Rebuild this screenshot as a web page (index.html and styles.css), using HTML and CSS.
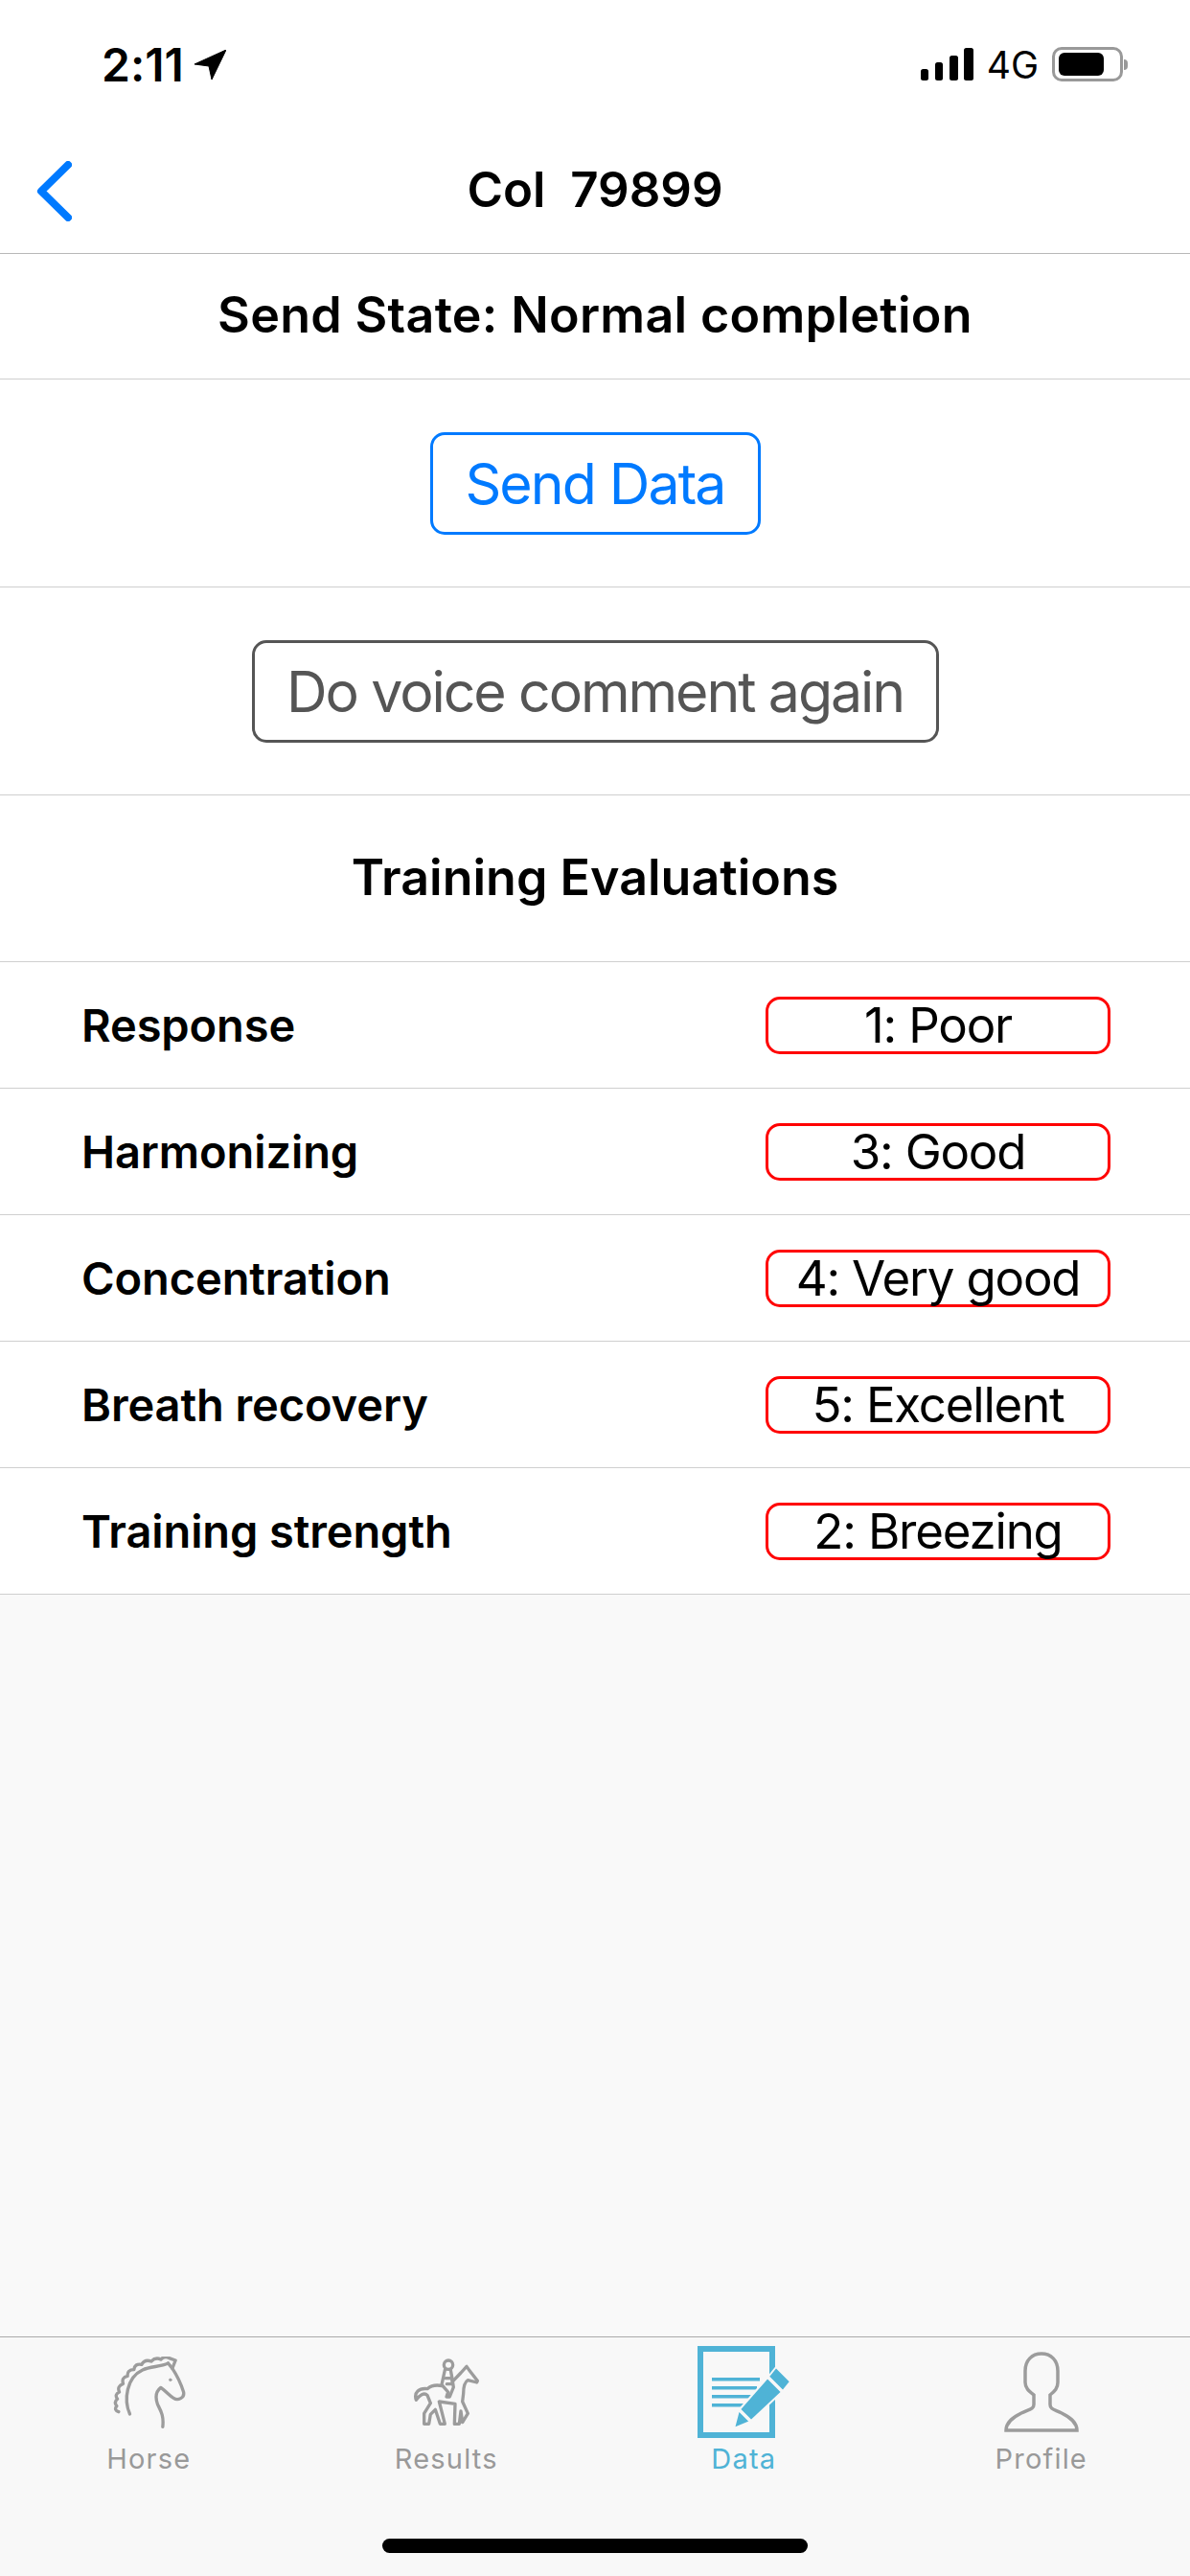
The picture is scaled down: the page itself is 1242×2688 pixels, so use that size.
FILE: index.html
```html
<!DOCTYPE html>
<html lang="en">
<head>
    <meta charset="UTF-8">
    <meta name="viewport" content="width=device-width, initial-scale=1.0">
    <title>Col 79899</title>
    <link rel="stylesheet" href="styles.css">
</head>
<body>
    <div class="page">
        <!-- Status bar -->
        <div class="status-bar">
            <div class="status-left">
                <span class="time">2:11</span>
                <svg class="location" viewBox="0 0 33 31"><path d="M33 0 L0 15 L15 17 L18 31 Z" fill="#000" stroke="#000" stroke-width="1" stroke-linejoin="round"/></svg>
            </div>
            <div class="status-right">
                <svg class="signal" viewBox="0 0 55 34">
                    <rect x="0" y="22" width="8" height="12" rx="2.500"/>
                    <rect x="15" y="15" width="8" height="19" rx="2.500"/>
                    <rect x="30" y="8" width="9" height="26" rx="2.500"/>
                    <rect x="45" y="0" width="10" height="34" rx="2.500"/>
                </svg>
                <span class="network">4G</span>
                <div class="battery"><div class="battery-level"></div></div>
                <div class="battery-nub"></div>
            </div>
        </div>

        <!-- Nav bar -->
        <div class="nav-bar">
            <svg class="back" viewBox="0 0 37 63"><path d="M33 4 L5 31.500 L33 59" fill="none" stroke="#007aff" stroke-width="8" stroke-linecap="round" stroke-linejoin="round"/></svg>
            <div class="nav-title">Col  79899</div>
        </div>

        <div class="section state-row">Send State: Normal completion</div>
        <div class="section button-row"><button class="btn btn-send">Send Data</button></div>
        <div class="section button-row"><button class="btn btn-voice">Do voice comment again</button></div>
        <div class="section eval-title">Training Evaluations</div>

        <div class="section eval-row"><span class="eval-label">Response</span><span class="eval-value">1: Poor</span></div>
        <div class="section eval-row"><span class="eval-label">Harmonizing</span><span class="eval-value">3: Good</span></div>
        <div class="section eval-row"><span class="eval-label">Concentration</span><span class="eval-value">4: Very good</span></div>
        <div class="section eval-row"><span class="eval-label">Breath recovery</span><span class="eval-value">5: Excellent</span></div>
        <div class="section eval-row"><span class="eval-label">Training strength</span><span class="eval-value">2: Breezing</span></div>

        <div class="spacer"></div>

        <!-- Tab bar -->
        <div class="tab-bar">
            <div class="tabs">
                <div class="tab">
                    <div class="tab-icon">
                        <svg class="icon-horse" viewBox="170 85 230 225" fill="none" stroke="#9c9c9c" stroke-width="10" stroke-linecap="round" stroke-linejoin="round">
                            <path d="M225 265 C205 220 215 150 265 127 C290 115 320 118 345 106"/>
                            <path d="M190 258 Q174 252 184 240 Q174 228 186 218 Q176 204 192 196 Q184 178 204 170 Q198 150 218 146 Q216 126 238 126 Q240 106 262 110 Q272 92 292 100 Q306 86 322 94 Q334 82 348 90 L368 97 L358 122"/>
                            <path d="M345 106 L358 122 C370 140 385 170 393 195 C398 215 375 224 362 215 C350 208 340 195 322 182 C305 195 305 215 312 235 C322 255 332 270 328 305"/>
                            <circle cx="352" cy="158" r="4" fill="#9c9c9c" stroke-width="2"/>
                        </svg>
                    </div>
                    <div class="tab-label">Horse</div>
                </div>
                <div class="tab">
                    <div class="tab-icon">
                        <svg class="icon-rider" viewBox="90 90 210 210" fill="none" stroke="#9c9c9c" stroke-width="10" stroke-linecap="round" stroke-linejoin="round">
                            <circle cx="201" cy="110" r="14"/>
                            <path d="M190 126 L180 172 L200 195 L195 210 L205 210 L217 180 L212 148 L208 126"/>
                            <path d="M192 152 L212 152 L214 170 L196 170"/>
                            <path d="M182 176 C165 172 150 172 135 185 C110 182 92 195 100 220 C110 205 125 195 135 205 L145 230 L125 262 L125 295 L140 295 L145 265 L160 250 L175 295 L190 295 L172 225 L222 232 L220 295 L235 295 L240 255 L245 290 L262 262 L245 225 L248 200 C248 180 250 165 262 158 L290 165 L292 160 L265 125 L258 115 L240 135 L216 160"/>
                        </svg>
                    </div>
                    <div class="tab-label">Results</div>
                </div>
                <div class="tab tab-active">
                    <div class="tab-icon">
                        <svg class="icon-data" viewBox="0 0 96 96">
                            <rect x="3" y="3" width="75" height="90" fill="none" stroke="#4fb3d6" stroke-width="6"/>
                            <rect x="15" y="33" width="50" height="3.500" fill="#4fb3d6"/>
                            <rect x="15" y="42" width="47" height="3.500" fill="#4fb3d6"/>
                            <rect x="15" y="51" width="42" height="3.500" fill="#4fb3d6"/>
                            <rect x="15" y="60" width="37" height="3.500" fill="#4fb3d6"/>
                            <g fill="#4fb3d6" stroke="#f8f8f8" stroke-width="2" stroke-linejoin="round">
                                <polygon points="82,22 97,37 89,47 74,32"/>
                                <polygon points="73,33 88,48 56,78 44,66"/>
                                <polygon points="43,67 55,79 38,86"/>
                            </g>
                        </svg>
                    </div>
                    <div class="tab-label">Data</div>
                </div>
                <div class="tab">
                    <div class="tab-icon">
                        <svg class="icon-profile" viewBox="0 0 78 84">
                            <path d="M39 2 C29 2 22 9 22 20 L22 32 C22 38 26 41 31 45 L31 55 C31 60 26 60 18 64 C8 69 2 74 2 82 L76 82 C76 74 70 69 60 64 C52 60 48 60 48 55 L48 45 C53 41 56 38 56 32 L56 20 C56 9 49 2 39 2 Z" fill="none" stroke="#9c9c9c" stroke-width="3.500"/>
                        </svg>
                    </div>
                    <div class="tab-label">Profile</div>
                </div>
            </div>
            <div class="home-indicator"></div>
        </div>
    </div>
</body>
</html>
```
FILE: styles.css
```css
body {
    margin: 0;
    font-family: Inter, "Liberation Sans", sans-serif;
    font-variant-ligatures: no-contextual;
    background-color: #f9f9f9;
    color: #000;
}
.page {
    display: flex;
    flex-direction: column;
    height: 2688px;
    overflow: hidden;
}

/* Status bar */
.status-bar {
    display: flex;
    justify-content: space-between;
    align-items: center;
    height: 134px;
    padding: 0 65px 0 106px;
    background-color: #fff;
    box-sizing: border-box;
}
.status-left, .status-right {
    display: flex;
    align-items: center;
}
.time {
    font-size: 48px;
    font-weight: 600;
}
.location {
    width: 33px;
    height: 31px;
    margin-left: 11px;
}
.signal {
    width: 55px;
    height: 34px;
}
.network {
    font-size: 39px;
    margin-left: 14px;
}
.battery {
    width: 74px;
    height: 36px;
    margin-left: 14px;
    padding: 3px 4px;
    border: 3px solid #999;
    border-radius: 10px;
    box-sizing: border-box;
}
.battery-level {
    width: 47px;
    height: 24px;
    background-color: #000;
    border-radius: 6px;
}
.battery-nub {
    width: 4px;
    height: 11px;
    margin-left: 1px;
    background-color: #999;
    border-radius: 0 4px 4px 0;
}

/* Nav bar */
.nav-bar {
    display: grid;
    grid-template-columns: 1fr auto 1fr;
    align-items: center;
    height: 130px;
    padding-left: 38px;
    padding-right: 38px;
    background-color: #fff;
    border-bottom: 1px solid #b8b8b8;
}
.back {
    width: 37px;
    height: 63px;
}
.nav-title {
    font-size: 51px;
    font-weight: 600;
    line-height: 60px;
    padding-bottom: 3px;
    white-space: pre;
}

/* Rows */
.section {
    background-color: #fff;
    border-bottom: 1px solid #cfcfcf;
}
.state-row {
    height: 130px;
    line-height: 128px;
    text-align: center;
    font-size: 52px;
    font-weight: 600;
    letter-spacing: 0.3px;
}
.button-row {
    display: flex;
    justify-content: center;
    align-items: center;
    height: 216px;
}
.btn {
    height: 107px;
    padding: 0;
    background-color: #fff;
    border: 3px solid;
    border-radius: 15px;
    font-family: Inter, "Liberation Sans", sans-serif;
    font-size: 59px;
    letter-spacing: -1.9px;
}
.btn-send {
    width: 345px;
    color: #007aff;
    border-color: #007aff;
}
.btn-voice {
    width: 717px;
    color: #555;
    border-color: #555;
    letter-spacing: -2.1px;
}
.eval-title {
    height: 173px;
    line-height: 172px;
    text-align: center;
    font-size: 52px;
    font-weight: 600;
}
.eval-row {
    display: flex;
    justify-content: space-between;
    align-items: center;
    height: 131px;
    padding: 0 83px 0 85px;
}
.eval-label {
    font-size: 47px;
    font-weight: 600;
    letter-spacing: -0.1px;
}
.eval-value {
    width: 360px;
    height: 60px;
    line-height: 54px;
    text-align: center;
    font-size: 51px;
    letter-spacing: -1.2px;
    border: 3px solid #f00;
    border-radius: 15px;
    box-sizing: border-box;
}
.spacer {
    flex: 1;
}

/* Tab bar */
.tab-bar {
    background-color: #f8f8f8;
    border-top: 1px solid #aaa;
    height: 250px;
    box-sizing: border-box;
}
.tabs {
    display: grid;
    grid-template-columns: repeat(4, 1fr);
    padding-top: 9px;
}
.tab {
    display: flex;
    flex-direction: column;
    align-items: center;
    color: #999;
}
.tab-active {
    color: #4fb3d6;
}
.tab-icon {
    display: flex;
    align-items: center;
    justify-content: center;
    height: 96px;
}
.icon-horse {
    width: 77px;
    height: 75px;
}
.icon-rider {
    width: 70px;
    height: 70px;
}
.icon-data {
    width: 96px;
    height: 96px;
}
.icon-profile {
    width: 78px;
    height: 84px;
}
.tab-label {
    margin-top: 4px;
    font-size: 29px;
    letter-spacing: 1.2px;
    line-height: 36px;
}
.home-indicator {
    width: 444px;
    height: 15px;
    margin: 65px auto 0;
    background-color: #000;
    border-radius: 8px;
}
```
